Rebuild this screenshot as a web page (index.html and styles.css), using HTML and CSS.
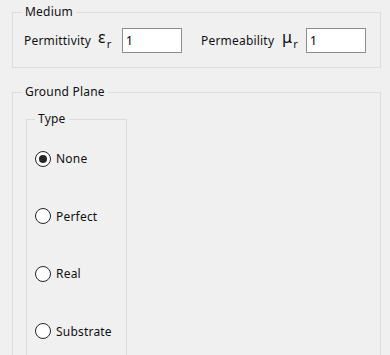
FILE: index.html
```html
<!doctype html>
<html lang="en">
<head>
  <meta charset="utf-8">
  <title>Medium and Ground Plane</title>
  <link rel="stylesheet" href="styles.css">
</head>
<body>
  <div class="panel">
    <fieldset class="group medium">
      <legend>Medium</legend>
      <div class="row">
        <label class="field-label" for="eps">Permittivity</label>
        <span class="sym">&epsilon;<sub>r</sub></span>
        <input class="num" id="eps" type="text" value="1">
        <label class="field-label second" for="mu">Permeability</label>
        <span class="sym">&mu;<sub>r</sub></span>
        <input class="num" id="mu" type="text" value="1">
      </div>
    </fieldset>

    <fieldset class="group ground">
      <legend>Ground Plane</legend>
      <fieldset class="group type">
        <legend>Type</legend>
        <label class="radio"><input type="radio" name="gp" checked>None</label>
        <label class="radio"><input type="radio" name="gp">Perfect</label>
        <label class="radio"><input type="radio" name="gp">Real</label>
        <label class="radio"><input type="radio" name="gp">Substrate</label>
      </fieldset>
    </fieldset>
  </div>
</body>
</html>
```

FILE: styles.css
```css
html, body {
  margin: 0;
  height: 100%;
  overflow: hidden;
  background: #f0f0f0;
}

body {
  font-family: "Noto Sans", "Open Sans", sans-serif;
  font-size: 12px;
  letter-spacing: 0.2px;
  color: #111;
}

.panel {
  padding: 5px 0 0 12px;
  width: 369px;
}

.group {
  margin: 0;
  border: 1px solid #dcdcdc;
  min-width: 0;
}

.group > legend {
  padding: 0 3px;
  line-height: 14px;
}

.medium {
  padding: 9px 0 14px 11px;
}

.medium > legend {
  margin-left: -2px;
}

.row {
  display: flex;
  align-items: center;
  height: 25px;
}

.field-label {
  width: 74px;
  flex: none;
}

.field-label.second {
  width: 81px;
  margin-left: 19px;
}

.sym {
  width: 24px;
  flex: none;
  font-size: 16px;
  line-height: 16px;
}

.sym sub {
  font-size: 11px;
  vertical-align: -5px;
  margin-left: 1px;
}

.num {
  box-sizing: border-box;
  width: 60px;
  height: 25px;
  flex: none;
  margin: 0;
  padding: 0 3px;
  border: 1px solid #8c8c8c;
  background: #fff;
  font: inherit;
  color: #000;
  outline: none;
}

.ground {
  margin-top: 17px;
  padding: 13px 0 0 13px;
  height: 400px;
}

.ground > legend {
  margin-left: -4px;
}

.type {
  width: 101px;
  box-sizing: border-box;
  height: 400px;
  padding: 4px 0 0 8px;
}

.radio {
  display: flex;
  align-items: center;
  height: 57.5px;
}

.radio input {
  appearance: none;
  box-sizing: border-box;
  width: 16px;
  height: 16px;
  margin: 0 5px 0 0;
  border: 1px solid #262626;
  border-radius: 50%;
  background: #fff;
  display: grid;
  place-items: center;
}

.radio input:checked::before {
  content: "";
  width: 8px;
  height: 8px;
  border-radius: 50%;
  background: #262626;
}
```
